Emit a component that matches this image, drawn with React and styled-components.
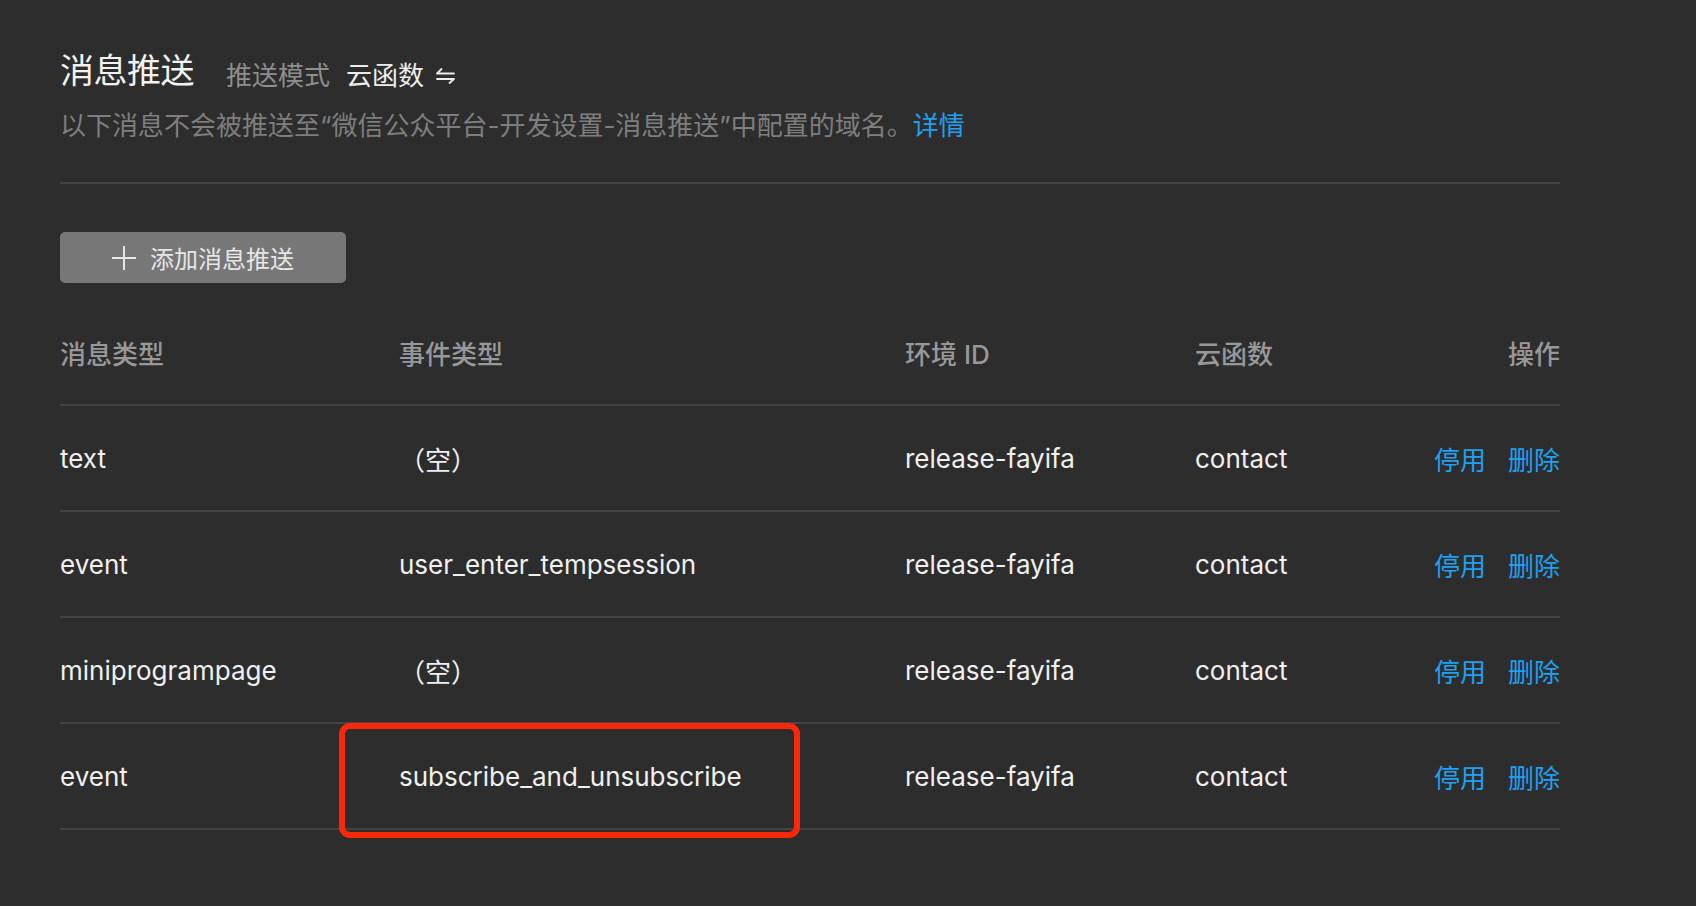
import React from 'react'
import styled, { createGlobalStyle } from 'styled-components'

const GlobalStyle = createGlobalStyle`
  html, body {
    margin: 0;
    padding: 0;
    background: #2d2d2d;
  }
  body {
    font-family: Inter, "Noto Sans CJK SC", sans-serif;
    -webkit-font-smoothing: antialiased;
  }
`

const rows = [
  { msgType: 'text', event: '（空）', env: 'release-fayifa', fn: 'contact' },
  { msgType: 'event', event: 'user_enter_tempsession', env: 'release-fayifa', fn: 'contact' },
  { msgType: 'miniprogrampage', event: '（空）', env: 'release-fayifa', fn: 'contact' },
  {
    msgType: 'event',
    event: 'subscribe_and_unsubscribe',
    env: 'release-fayifa',
    fn: 'contact',
    marked: true,
  },
]

const Page = styled.div`
  width: 1500px;
  padding: 44px 0 0 60px;
  min-height: 862px;
  box-sizing: content-box;
`
const Header = styled.div`
  border-bottom: 2px solid #444;
  padding-bottom: 36px;
`
const TitleRow = styled.div`
  display: flex;
  align-items: baseline;
  height: 48px;
`
const Title = styled.h1`
  margin: 0;
  font-size: 34px;
  font-weight: 400;
  color: #f2f2f2;
  letter-spacing: -0.5px;
`
const ModeLabel = styled.span`
  margin-left: 32px;
  font-size: 26px;
  color: #8e8e8e;
  position: relative;
  top: 2px;
`
const ModeValue = styled.span`
  margin-left: 16px;
  font-size: 26px;
  color: #ececec;
  display: inline-flex;
  align-items: baseline;
  gap: 12px;
  position: relative;
  top: 2px;
`
const SwitchIcon = styled.svg`
  width: 19px;
  height: 16px;
  align-self: center;
  transform: translateY(2px);
`
const Desc = styled.p`
  margin: 14px 0 0;
  font-size: 26px;
  color: #7e7e7e;
  line-height: 40px;
`
const Link = styled.a`
  color: #1fa0f0;
  text-decoration: none;
  cursor: pointer;
`
const AddButton = styled.button`
  margin-top: 48px;
  width: 286px;
  height: 51px;
  border: none;
  border-radius: 5px;
  background: #777;
  color: #e6e6e6;
  font-family: inherit;
  font-size: 24px;
  display: flex;
  align-items: center;
  justify-content: center;
  gap: 14px;
  padding: 0;
  cursor: pointer;
`
const PlusIcon = styled.svg`
  width: 24px;
  height: 24px;
`
const Table = styled.div`
  margin-top: 17px;
`
const Row = styled.div`
  display: grid;
  grid-template-columns: 339px 506px 290px 1fr auto;
  height: 104px;
  border-bottom: 2px solid #444;
  font-size: 26px;
  color: ${(p) => (p.$head ? '#989898' : '#f0f0f0')};
  font-weight: ${(p) => (p.$head ? 500 : 400)};
`
const Cell = styled.div`
  position: relative;
  white-space: nowrap;
  display: flex;
  align-items: center;
`
const Actions = styled.div`
  display: flex;
  align-items: center;
  gap: 22px;
  font-size: 26px;
  justify-content: flex-end;
`
const Mark = styled.div`
  position: absolute;
  left: -60px;
  top: -1px;
  width: 461px;
  height: 115px;
  border: 6px solid #f8290b;
  border-radius: 11px;
  box-sizing: border-box;
  pointer-events: none;
`

export default function App() {
  return (
    <>
      <GlobalStyle />
      <Page>
        <Header>
          <TitleRow>
            <Title>消息推送</Title>
            <ModeLabel>推送模式</ModeLabel>
            <ModeValue>
              云函数
              <SwitchIcon viewBox="0 0 19 16" fill="none" stroke="#ececec" strokeWidth="1.8" strokeLinecap="round">
                <path d="M1 5.5H18M1 5.5L5.5 1" />
                <path d="M1 11H18M18 11L13.5 15" />
              </SwitchIcon>
            </ModeValue>
          </TitleRow>
          <Desc>
            以下消息不会被推送至“微信公众平台-开发设置-消息推送”中配置的域名。<Link>详情</Link>
          </Desc>
        </Header>
        <AddButton>
          <PlusIcon viewBox="0 0 24 24" stroke="#e6e6e6" strokeWidth="2">
            <path d="M12 0V24M0 12H24" />
          </PlusIcon>
          添加消息推送
        </AddButton>
        <Table>
          <Row $head>
            <Cell>消息类型</Cell>
            <Cell>事件类型</Cell>
            <Cell>环境 ID</Cell>
            <Cell>云函数</Cell>
            <Cell>操作</Cell>
          </Row>
          {rows.map((r, i) => (
            <Row key={i}>
              <Cell>{r.msgType}</Cell>
              <Cell>
                {r.event}
                {r.marked && <Mark />}
              </Cell>
              <Cell>{r.env}</Cell>
              <Cell>{r.fn}</Cell>
              <Actions>
                <Link>停用</Link>
                <Link>删除</Link>
              </Actions>
            </Row>
          ))}
        </Table>
      </Page>
    </>
  )
}
